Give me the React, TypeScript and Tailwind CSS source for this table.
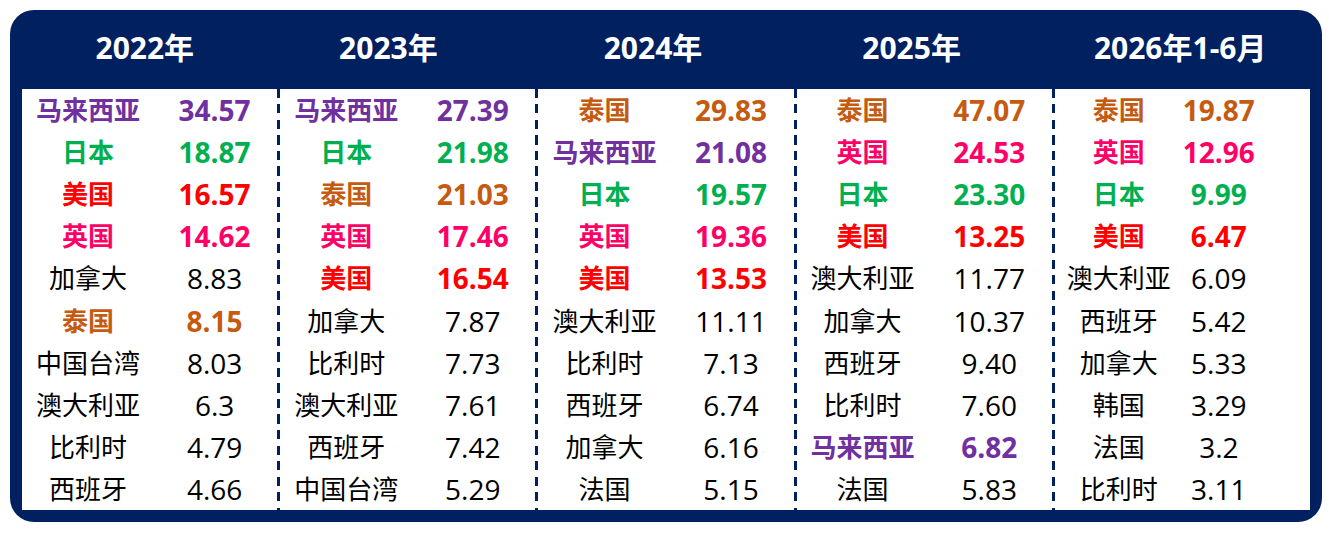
type Tone = "purple" | "green" | "red" | "pink" | "orange" | "plain";

const toneClass: Record<Tone, string> = {
  purple: "text-[#7030A0] font-bold",
  green: "text-[#00B050] font-bold",
  red: "text-[#FF0000] font-bold",
  pink: "text-[#FF0066] font-bold",
  orange: "text-[#C55A11] font-bold",
  plain: "text-black font-normal",
};

const toneOf: Record<string, Tone> = {
  马来西亚: "purple",
  日本: "green",
  美国: "red",
  英国: "pink",
  泰国: "orange",
};

const years = [
  { label: "2022年", shift: "pr-[12px]" },
  { label: "2023年", shift: "pr-[40px]" },
  { label: "2024年", shift: "pr-[26px]" },
  { label: "2025年", shift: "pr-[24px]" },
  { label: "2026年1-6月", shift: "pr-[2px]" },
];

const columns: [string, string][][] = [
  [
    ["马来西亚", "34.57"],
    ["日本", "18.87"],
    ["美国", "16.57"],
    ["英国", "14.62"],
    ["加拿大", "8.83"],
    ["泰国", "8.15"],
    ["中国台湾", "8.03"],
    ["澳大利亚", "6.3"],
    ["比利时", "4.79"],
    ["西班牙", "4.66"],
  ],
  [
    ["马来西亚", "27.39"],
    ["日本", "21.98"],
    ["泰国", "21.03"],
    ["英国", "17.46"],
    ["美国", "16.54"],
    ["加拿大", "7.87"],
    ["比利时", "7.73"],
    ["澳大利亚", "7.61"],
    ["西班牙", "7.42"],
    ["中国台湾", "5.29"],
  ],
  [
    ["泰国", "29.83"],
    ["马来西亚", "21.08"],
    ["日本", "19.57"],
    ["英国", "19.36"],
    ["美国", "13.53"],
    ["澳大利亚", "11.11"],
    ["比利时", "7.13"],
    ["西班牙", "6.74"],
    ["加拿大", "6.16"],
    ["法国", "5.15"],
  ],
  [
    ["泰国", "47.07"],
    ["英国", "24.53"],
    ["日本", "23.30"],
    ["美国", "13.25"],
    ["澳大利亚", "11.77"],
    ["加拿大", "10.37"],
    ["西班牙", "9.40"],
    ["比利时", "7.60"],
    ["马来西亚", "6.82"],
    ["法国", "5.83"],
  ],
  [
    ["泰国", "19.87"],
    ["英国", "12.96"],
    ["日本", "9.99"],
    ["美国", "6.47"],
    ["澳大利亚", "6.09"],
    ["西班牙", "5.42"],
    ["加拿大", "5.33"],
    ["韩国", "3.29"],
    ["法国", "3.2"],
    ["比利时", "3.11"],
  ],
];

const Divider = () => (
  <div className="w-[3px] shrink-0 bg-[repeating-linear-gradient(to_bottom,#002060_0px,#002060_9px,transparent_9px,transparent_15.5px)]" />
);

const Column = ({ rows, last }: { rows: [string, string][]; last: boolean }) => (
  <div className="flex-1 flex flex-col">
    {rows.map(([name, value], i) => {
      const tone = toneClass[toneOf[name] ?? "plain"];
      return (
        <div
          key={i}
          className={`h-[42.1px] grid items-center ${
            last ? "grid-cols-[128px_72px_1fr]" : "grid-cols-[132px_1fr]"
          } ${tone}`}
        >
          <span className="text-center text-[26px] leading-none">{name}</span>
          <span
            className={`text-center text-[28px] leading-none ${
              last ? "" : "pr-[2px]"
            }`}
          >
            {value}
          </span>
        </div>
      );
    })}
  </div>
);

export default function App() {
  return (
    <div className="w-[1329px] h-[537px] bg-white pt-[10px] pl-[10px] font-['Open_Sans','Noto_Sans_CJK_SC',sans-serif]">
      <div className="w-[1312px] h-[512px] rounded-[24px] bg-[#002060] px-[12px] pb-[12px] flex flex-col">
        <div className="h-[79px] grid grid-cols-5 items-center pb-[3px]">
          {years.map((y) => (
            <div
              key={y.label}
              className={`text-center text-white font-bold text-[30px] leading-none ${y.shift}`}
            >
              {y.label}
            </div>
          ))}
        </div>
        <div className="flex-1 bg-white flex">
          {columns.map((rows, i) => (
            <div key={i} className="contents">
              {i > 0 && <Divider />}
              <Column rows={rows} last={i === columns.length - 1} />
            </div>
          ))}
        </div>
      </div>
    </div>
  );
}
